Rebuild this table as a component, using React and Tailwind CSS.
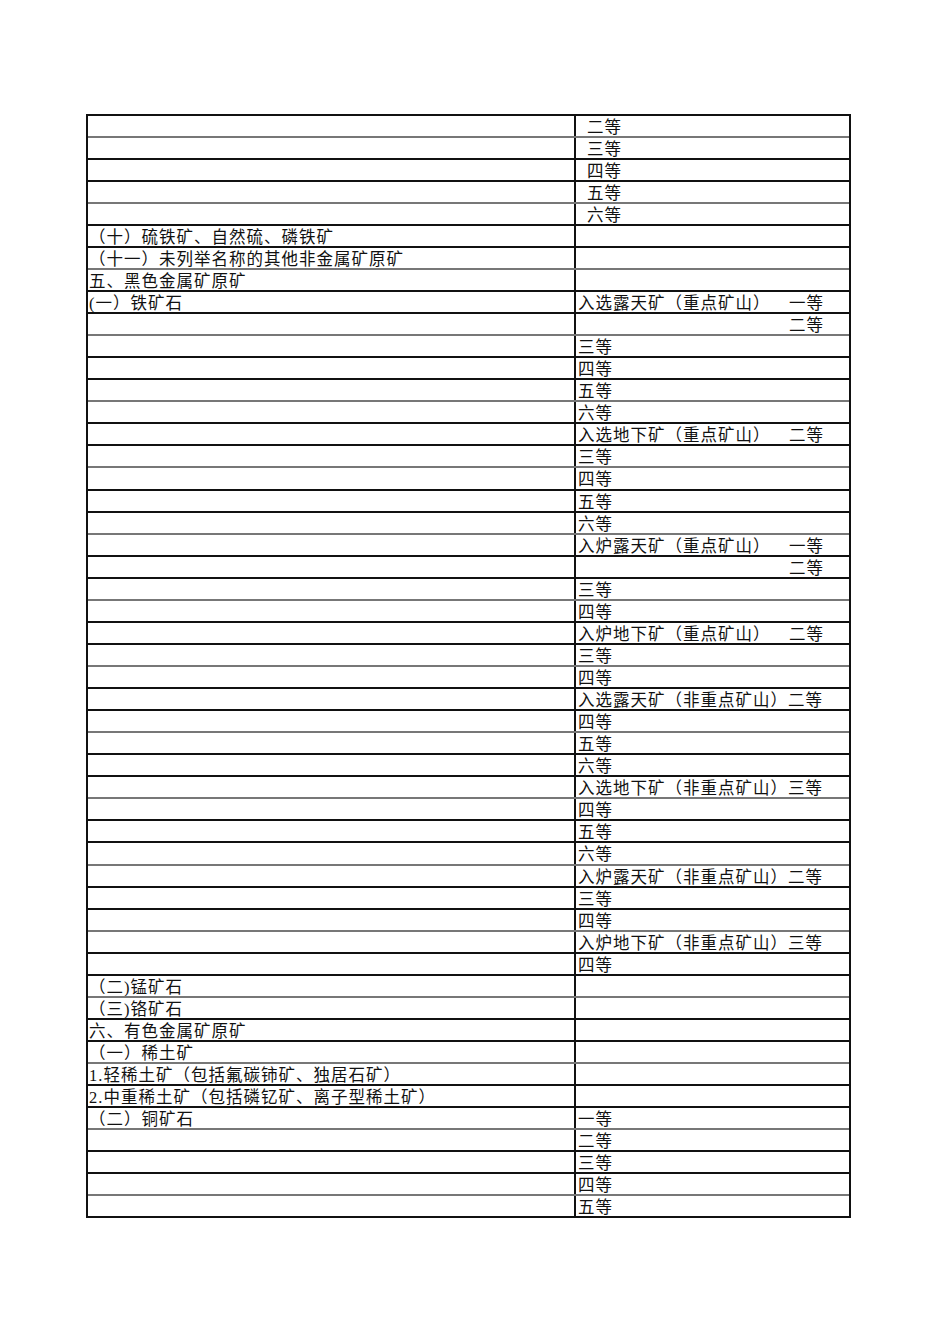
import React from 'react'

// right cell: string = plain text, { label, grade } = label left + grade pushed right
const rows = [
  ['', '二等', 'indent'],
  ['', '三等', 'indent'],
  ['', '四等', 'indent'],
  ['', '五等', 'indent'],
  ['', '六等', 'indent'],
  ['（十）硫铁矿、自然硫、磷铁矿', ''],
  ['（十一）未列举名称的其他非金属矿原矿', ''],
  ['五、黑色金属矿原矿', ''],
  ['(一）铁矿石', { label: '入选露天矿（重点矿山）', grade: '一等' }],
  ['', { label: '', grade: '二等' }],
  ['', '三等'],
  ['', '四等'],
  ['', '五等'],
  ['', '六等'],
  ['', { label: '入选地下矿（重点矿山）', grade: '二等' }],
  ['', '三等'],
  ['', '四等'],
  ['', '五等'],
  ['', '六等'],
  ['', { label: '入炉露天矿（重点矿山）', grade: '一等' }],
  ['', { label: '', grade: '二等' }],
  ['', '三等'],
  ['', '四等'],
  ['', { label: '入炉地下矿（重点矿山）', grade: '二等' }],
  ['', '三等'],
  ['', '四等'],
  ['', '入选露天矿（非重点矿山）二等'],
  ['', '四等'],
  ['', '五等'],
  ['', '六等'],
  ['', '入选地下矿（非重点矿山）三等'],
  ['', '四等'],
  ['', '五等'],
  ['', '六等'],
  ['', '入炉露天矿（非重点矿山）二等'],
  ['', '三等'],
  ['', '四等'],
  ['', '入炉地下矿（非重点矿山）三等'],
  ['', '四等'],
  ['（二)锰矿石', ''],
  ['（三)铬矿石', ''],
  ['六、有色金属矿原矿', ''],
  ['（一）稀土矿', ''],
  ['1.轻稀土矿（包括氟碳铈矿、独居石矿）', ''],
  ['2.中重稀土矿（包括磷钇矿、离子型稀土矿）', ''],
  ['（二）铜矿石', '一等'],
  ['', '二等'],
  ['', '三等'],
  ['', '四等'],
  ['', '五等'],
]

function RightCell({ value, indent }) {
  if (value && typeof value === 'object') {
    return (
      <div className="flex pl-[2px] pr-[25px]">
        <span>{value.label}</span>
        <span className="ml-auto">{value.grade}</span>
      </div>
    )
  }
  return <div className={indent ? 'pl-[11px]' : 'pl-[2px]'}>{value}</div>
}

export default function App() {
  return (
    <div className="min-h-[1344px] w-[950px] bg-white pt-[114px] pl-[86px] font-['Liberation_Serif','Noto_Sans_CJK_SC',serif] text-[16.5px] tracking-[1px] text-[#111]">
      <div className="w-[765px] border-x-2 border-b-2 border-[#111]">
        {rows.map(([left, right, mode], i) => (
          <div
            key={i}
            className={
              'grid grid-cols-[488px_1fr] border-t-2 leading-[20px] ' +
              (i === 16 || i === 33 ? 'h-[23px] ' : 'h-[22px] ') +
              (i % 3 === 1 ? 'border-[#777]' : 'border-[#111]')
            }
          >
            <div className="overflow-hidden whitespace-nowrap border-r-2 border-[#111] pl-[1px] pt-[2px]">
              {left}
            </div>
            <div className="overflow-hidden whitespace-nowrap pt-[2px]">
              <RightCell value={right} indent={mode === 'indent'} />
            </div>
          </div>
        ))}
      </div>
    </div>
  )
}
